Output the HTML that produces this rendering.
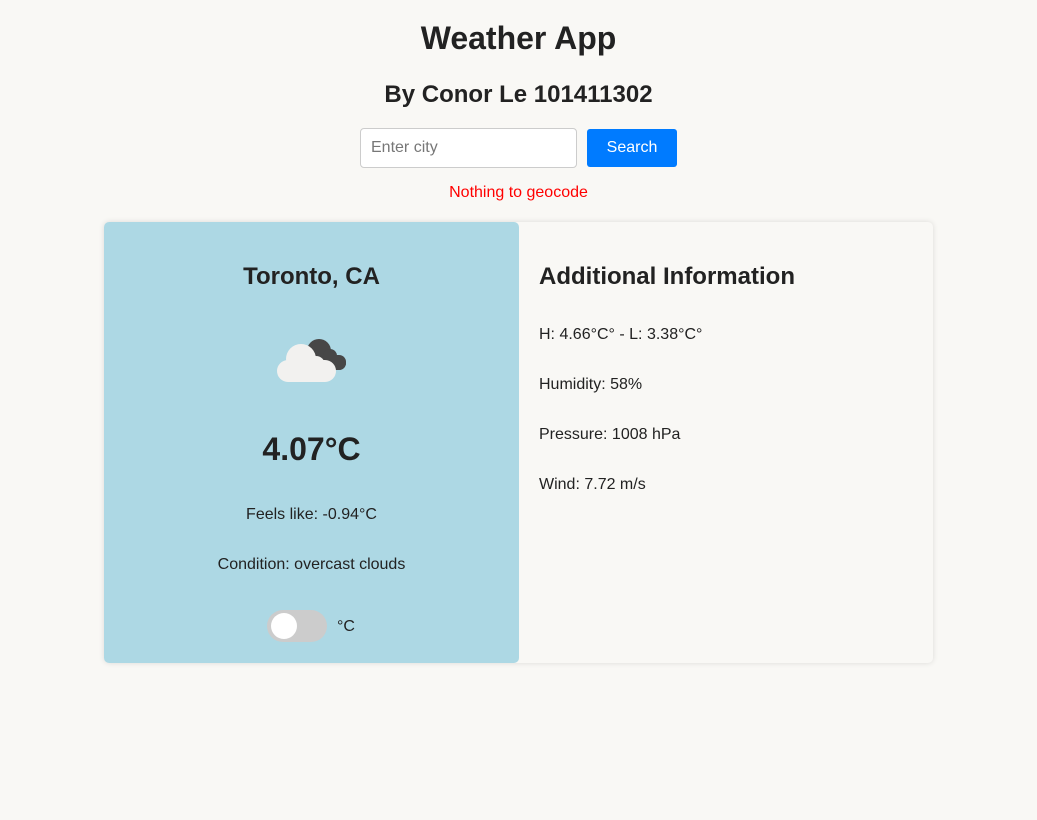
<!DOCTYPE html>
<html><head><style>
body{margin:0;background:#f9f8f5;font-family:"Liberation Sans",sans-serif;color:#222;width:1037px;height:820px;position:relative;overflow:hidden}
.a{position:absolute}
h1{position:absolute;margin:0;left:0;width:1037px;text-align:center;top:20px;font-size:32px;font-weight:bold}
h2{position:absolute;margin:0;left:0;width:1037px;text-align:center;top:81px;font-size:24px;font-weight:bold}
</style></head><body>
<h1>Weather App</h1>
<h2>By Conor Le 101411302</h2>
<div class="a" style="left:360px;top:128px;border:1px solid #ccc;border-radius:4px;background:#fff;box-sizing:border-box;width:217px;height:40px"></div>
<div class="a" style="left:371px;top:139px;font-size:16px;color:#777">Enter city</div>
<div class="a" style="left:587px;top:129px;width:90px;height:38px;background:#007bff;border-radius:3px;color:#fff;font-size:16px;text-align:center;line-height:38px">Search</div>
<div class="a" style="left:0;width:1037px;text-align:center;top:184px;font-size:16px;color:#f00">Nothing to geocode</div>
<div class="a" style="left:104px;top:222px;width:829px;height:441px;border-radius:5px;box-shadow:0 0 6px rgba(0,0,0,.12);background:#f9f8f5"></div>
<div class="a" style="left:104px;top:222px;width:415px;height:441px;border-radius:5px;background:#add8e4"></div>
<div class="a" style="left:104px;width:415px;text-align:center;top:263px;font-size:24px;font-weight:bold">Toronto, CA</div>
<svg class="a" style="left:270px;top:335px" width="80" height="50">
<g fill="#474747"><circle cx="49" cy="16" r="12"/><circle cx="60" cy="21" r="7"/><circle cx="69" cy="28" r="7"/><rect x="40" y="20" width="36" height="15" rx="7"/></g>
<g fill="#f2f1ef"><circle cx="31" cy="24" r="15"/><circle cx="46" cy="30" r="9"/><rect x="7" y="25" width="59" height="22" rx="11"/></g>
</svg>
<div class="a" style="left:104px;width:415px;text-align:center;top:431px;font-size:32px;font-weight:bold">4.07°C</div>
<div class="a" style="left:104px;width:415px;text-align:center;top:506px;font-size:16px">Feels like: -0.94°C</div>
<div class="a" style="left:104px;width:415px;text-align:center;top:556px;font-size:16px">Condition: overcast clouds</div>
<div class="a" style="left:267px;top:610px;width:60px;height:32px;border-radius:16px;background:#ccc"></div>
<div class="a" style="left:271px;top:613px;width:26px;height:26px;border-radius:50%;background:#fff"></div>
<div class="a" style="left:337px;top:618px;font-size:16px">°C</div>
<div class="a" style="left:539px;top:263px;font-size:24px;font-weight:bold">Additional Information</div>
<div class="a" style="left:539px;top:326px;font-size:16px">H: 4.66°C° - L: 3.38°C°</div>
<div class="a" style="left:539px;top:376px;font-size:16px">Humidity: 58%</div>
<div class="a" style="left:539px;top:426px;font-size:16px">Pressure: 1008 hPa</div>
<div class="a" style="left:539px;top:476px;font-size:16px">Wind: 7.72 m/s</div>
</body></html>
